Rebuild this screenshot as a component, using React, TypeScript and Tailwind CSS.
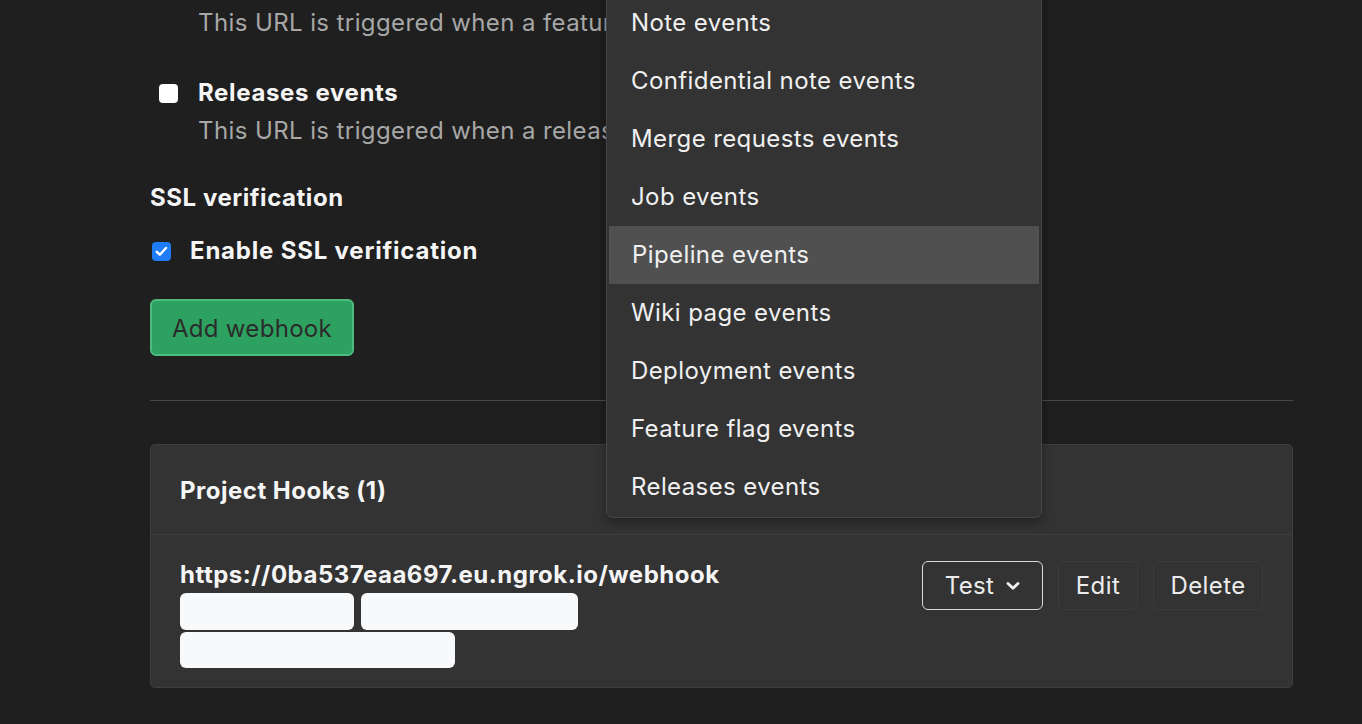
import { ReactNode } from "react";

const font = { fontFamily: "Inter, 'Noto Sans', sans-serif" };

function EventOption({
  label,
  desc,
}: {
  label: string;
  desc: string;
}) {
  return (
    <div className="mb-[32px]">
      <div className="flex items-center h-[38px]">
        <span className="ml-[9px] w-[19px] h-[19px] rounded-[4px] bg-white" />
        <span className="ml-[20px] text-[24px] font-bold tracking-[0.65px] text-[#f5f5f5]">
          {label}
        </span>
      </div>
      <div className="ml-[48px] h-[38px] flex items-center text-[24px] tracking-[0.4px] text-[#a7a7a7] whitespace-nowrap">
        {desc}
      </div>
    </div>
  );
}

function Chevron() {
  return (
    <svg width="14" height="10" viewBox="0 0 14 10" className="ml-[12px]">
      <path
        d="M2 2.5 L7 7.3 L12 2.5"
        fill="none"
        stroke="#f2f2f2"
        strokeWidth="2.8"
        strokeLinecap="round"
        strokeLinejoin="round"
      />
    </svg>
  );
}

function GhostButton({ children, className }: { children: ReactNode; className?: string }) {
  return (
    <button
      className={
        "h-[49px] flex items-center justify-center rounded-[6px] border text-[24px] tracking-[0.4px] text-[#ececec] " +
        (className ?? "")
      }
    >
      {children}
    </button>
  );
}

const menuItems = [
  "Note events",
  "Confidential note events",
  "Merge requests events",
  "Job events",
  "Pipeline events",
  "Wiki page events",
  "Deployment events",
  "Feature flag events",
  "Releases events",
];

export default function App() {
  return (
    <div
      className="relative h-[724px] w-full overflow-hidden bg-[#1f1f1f]"
      style={font}
    >
      <div className="ml-[150px] w-[1143px] -mt-[34px]">
        <EventOption
          label="Feature flag events"
          desc="This URL is triggered when a feature flag is turned on or off"
        />
        <EventOption
          label="Releases events"
          desc="This URL is triggered when a release is created or updated"
        />

        <div className="-mt-[3px] h-[38px] flex items-center text-[24px] font-bold tracking-[0.55px] text-[#f5f5f5]">
          SSL verification
        </div>
        <div className="mt-[15px] h-[38px] flex items-center">
          <span className="ml-[2px] w-[19px] h-[19px] rounded-[4px] bg-[#1f7bf6] flex items-center justify-center">
            <svg width="13" height="11" viewBox="0 0 13 11">
              <path
                d="M1.8 5.8 L4.8 8.7 L11 2"
                fill="none"
                stroke="white"
                strokeWidth="2.4"
                strokeLinecap="round"
                strokeLinejoin="round"
              />
            </svg>
          </span>
          <span className="ml-[19px] text-[24px] font-bold tracking-[0.8px] text-[#f5f5f5]">
            Enable SSL verification
          </span>
        </div>

        <button className="mt-[29px] w-[204px] h-[57px] pt-[3px] rounded-[6px] bg-[#2da160] border-2 border-[#4dbb7c] text-[24px] tracking-[0.3px] text-[#2b2b2b]">
          Add webhook
        </button>

        <div className="mt-[44px] h-px bg-[#484848]" />

        <div className="mt-[43px] rounded-[5px] border border-[#3e3e3e] bg-[#333333]">
          <div className="h-[90px] flex items-center pt-[2px] px-[29px] border-b border-[#3e3e3e] text-[24px] font-bold tracking-[0.5px] text-[#f5f5f5]">
            Project Hooks (1)
          </div>
          <div className="flex justify-between pl-[29px] pr-[29px] pt-[25px] pb-[19px]">
            <div>
              <div className="text-[24px] font-bold tracking-[0.5px] text-[#f5f5f5] leading-[30px]">
                https://0ba537eaa697.eu.ngrok.io/webhook
              </div>
              <div className="flex gap-[7px] mt-[3px]">
                <span className="w-[174px] h-[37px] rounded-[6px] bg-[#f8f9fb]" />
                <span className="w-[217px] h-[37px] rounded-[6px] bg-[#f8f9fb]" />
              </div>
              <div className="mt-[2px] w-[275px] h-[36px] rounded-[6px] bg-[#f8f9fb]" />
            </div>
            <div className="flex gap-[15px] mt-[1px]">
              <GhostButton className="w-[121px] border-[#d9d9d9]">
                Test
                <Chevron />
              </GhostButton>
              <GhostButton className="w-[80px] border-[#3d3d3d]">Edit</GhostButton>
              <GhostButton className="w-[110px] border-[#3d3d3d]">Delete</GhostButton>
            </div>
          </div>
        </div>
      </div>

      <div className="absolute left-[606px] top-[-16px] w-[436px] rounded-[7px] border border-[#474747] bg-[#333333] shadow-[0_4px_12px_rgba(0,0,0,0.35)] pt-[9px] pb-[1px] px-px">
        {menuItems.map((item) => (
          <div
            key={item}
            className={
              "h-[58px] flex items-center pl-[23px] text-[24px] tracking-[0.4px] text-[#f0f0f0] " +
              (item === "Pipeline events" ? "bg-[#505050] mx-px" : "")
            }
          >
            {item}
          </div>
        ))}
      </div>
    </div>
  );
}
